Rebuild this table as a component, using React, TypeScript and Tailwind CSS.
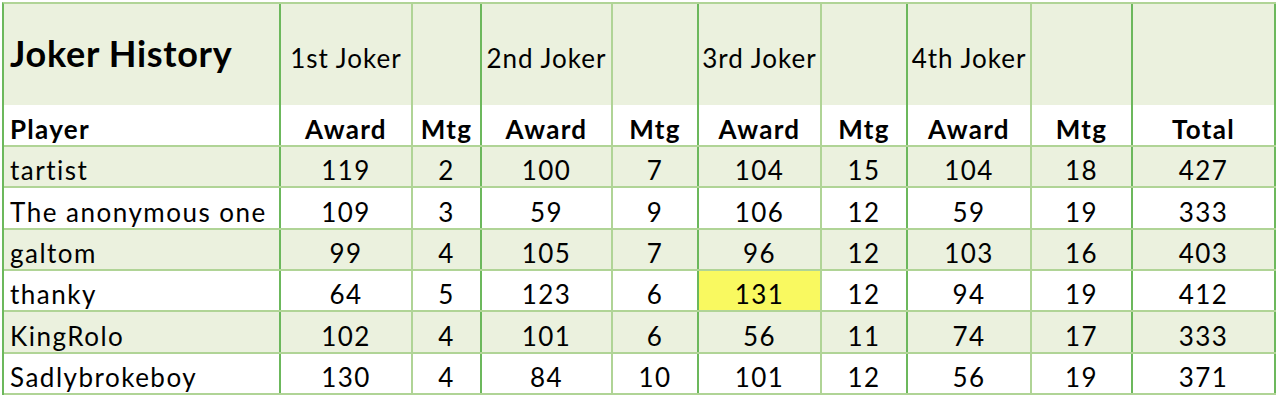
import React from "react";

const cols = [
  "w-[277px]",
  "w-[132px]",
  "w-[69px]",
  "w-[131px]",
  "w-[86px]",
  "w-[123px]",
  "w-[86px]",
  "w-[124px]",
  "w-[101px]",
  "w-[143px]",
];

const dark = [true, false, true, false, true, false, true, false, true, true];

const rows: (string | number)[][] = [
  ["tartist", 119, 2, 100, 7, 104, 15, 104, 18, 427],
  ["The anonymous one", 109, 3, 59, 9, 106, 12, 59, 19, 333],
  ["galtom", 99, 4, 105, 7, 96, 12, 103, 16, 403],
  ["thanky", 64, 5, 123, 6, 131, 12, 94, 19, 412],
  ["KingRolo", 102, 4, 101, 6, 56, 11, 74, 17, 333],
  ["Sadlybrokeboy", 130, 4, 84, 10, 101, 12, 56, 19, 371],
];

const heights = ["h-[41px]", "h-[42px]", "h-[41px]", "h-[41px]", "h-[42px]", "h-[41px]"];

function border(i: number) {
  return dark[i] ? "border-r-2 border-r-[#6cb85c]" : "border-r-2 border-r-[#b0d496]";
}

export default function App() {
  const top = ["Joker History", "1st Joker", "", "2nd Joker", "", "3rd Joker", "", "4th Joker", "", ""];
  const sub = ["Player", "Award", "Mtg", "Award", "Mtg", "Award", "Mtg", "Award", "Mtg", "Total"];
  return (
    <div
      className="w-[1280px] h-[400px] bg-white pt-[2px] pl-[2px] text-black"
      style={{ fontFamily: "Lato, 'Liberation Sans', sans-serif" }}
    >
      <div className="w-[1274px] border-l-2 border-l-[#6cb85c] border-t-2 border-t-[#b0d496]">
        <div className="flex h-[101px] bg-[#ebf1de]">
          {top.map((t, i) => (
            <div
              key={i}
              className={`${cols[i]} shrink-0 h-full flex items-end pb-[34px] leading-none whitespace-nowrap ${border(i)} ${
                i === 0
                  ? "pl-[6px] text-[36px] font-bold tracking-[0.7px]"
                  : "justify-center text-[26px] tracking-[1px]"
              }`}
            >
              {t}
            </div>
          ))}
        </div>
        <div className="flex h-[42px] bg-white border-b-2 border-b-[#b0d496]">
          {sub.map((t, i) => (
            <div
              key={i}
              className={`${cols[i]} shrink-0 h-full flex items-center pt-[8px] leading-none font-bold text-[26px] tracking-[1.3px] ${border(i)} ${
                i === 0 ? "pl-[6px]" : "justify-center"
              }`}
            >
              {t}
            </div>
          ))}
        </div>
        {rows.map((r, ri) => (
          <div
            key={ri}
            className={`flex ${heights[ri]} border-b-2 border-b-[#b0d496] ${
              ri % 2 === 0 ? "bg-[#ebf1de]" : "bg-white"
            }`}
          >
            {r.map((v, i) => (
              <div
                key={i}
                className={`${cols[i]} shrink-0 h-full flex items-center pt-[7px] leading-none text-[26px] tracking-[1.5px] whitespace-nowrap ${border(
                  i
                )} ${i === 0 ? "pl-[6px]" : "justify-center"} ${ri === 3 && i === 5 ? "bg-[#f9f960]" : ""}`}
              >
                {v}
              </div>
            ))}
          </div>
        ))}
      </div>
    </div>
  );
}
